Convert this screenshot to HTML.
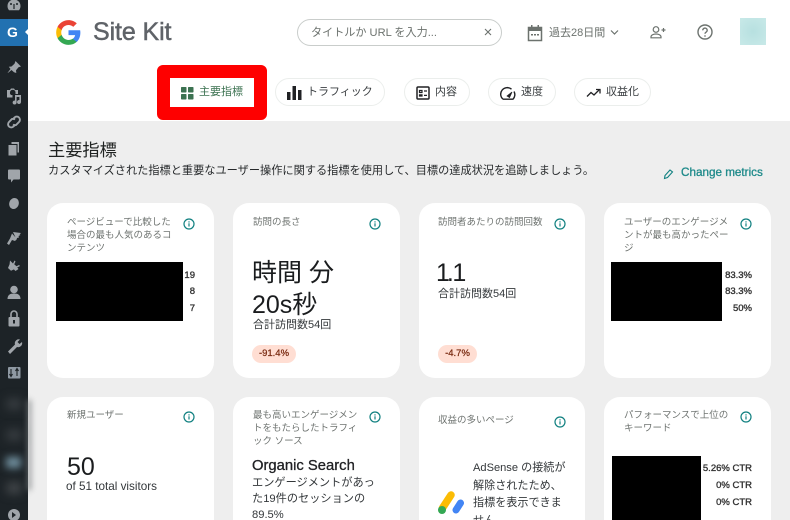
<!DOCTYPE html>
<html lang="ja"><head><meta charset="utf-8">
<style>
html,body{margin:0;padding:0;width:790px;height:520px;overflow:hidden;background:#eee}
body{position:relative;font-family:"Liberation Sans","Noto Sans CJK JP",sans-serif;color:#1f2124}
.a{position:absolute;white-space:nowrap}
.card{position:absolute;background:#fff;border-radius:16px}
.t{position:absolute;font-size:9.5px;line-height:13px;color:#6f7471;white-space:nowrap}
.i{position:absolute;width:12px;height:12px}
.chip{position:absolute;top:78px;height:28px;box-sizing:border-box;border:1px solid #ebeeec;border-radius:15px;background:#fff}
.cl{font-size:11px;line-height:16px;color:#3c4043}
.b{position:absolute;background:#000}
.n{position:absolute;font-size:9.5px;line-height:12px;color:#333;text-align:right;white-space:nowrap;-webkit-text-stroke:.35px #333}
.pill{position:absolute;height:18px;border-radius:9px;background:#ffded3;color:#7a2b12;font-size:9.5px;line-height:17px;text-align:center;-webkit-text-stroke:.25px #7a2b12}
</style></head><body>
<svg width="0" height="0" style="position:absolute"><defs>
<symbol id="info" viewBox="0 0 12 12"><circle cx="6" cy="6" r="5" fill="none" stroke="#108080" stroke-width="1.200"/><rect x="5.400" y="5.300" width="1.200" height="3.200" fill="#108080"/><rect x="5.400" y="3.300" width="1.200" height="1.200" fill="#108080"/></symbol>
</defs></svg>

<!-- sidebar -->
<div class="a" style="left:0;top:0;width:28px;height:520px;background:#1d2327"></div>
<div class="a" style="left:0;top:19px;width:28px;height:27px;background:#2271b1"></div>
<div class="a" style="left:7px;top:23px;font:bold 14px/18px 'Liberation Sans';color:#fff">G</div>
<div class="a" style="left:25px;top:28px;width:0;height:0;border:4px solid transparent;border-right-color:#fff;border-left:0"></div>
<svg class="a" style="left:0;top:0" width="28" height="520" fill="#a0a5aa">
<path d="M7.500 6a6.500 6.500 0 0 1 13 0c0 2-.7 3.200-1.500 4.200H9C8.200 9.200 7.500 8 7.500 6z"/><circle cx="11" cy="4" r="1" fill="#1d2327"/><circle cx="17" cy="4" r="1" fill="#1d2327"/><rect x="13.400" y="4" width="1.200" height="5" fill="#1d2327"/>
<path d="M15.500 61l5.500 5.500-2.500.8-2.500 3 .3 2.700-2.300-.8-2.500-2.200-3 2.500-1 .5 3-4-1.700-2.300 2.700-.2 3-2.700z"/>
<path d="M7 90h3l1-1.500h3l1 1.500h3v4h-2.500v-1.500a2 2 0 0 0-5.500 0 2 2 0 0 0 2.500 2.500v2.500H7z"/><path d="M15 95h6v7a2 2 0 1 1-1.600-1.900V97h-2.800v5.500a2 2 0 1 1-1.600-1.900z"/>
<path d="M12.500 119.500l2-2a3 3 0 0 1 4.500 4.500l-3 3a3 3 0 0 1-3-.5M15.500 124.500l-2 2a3 3 0 0 1-4.500-4.500l3-3a3 3 0 0 1 3 .5" stroke="#a0a5aa" stroke-width="1.900" fill="none"/>
<rect x="11.500" y="142" width="7.500" height="10.500" /><rect x="8" y="144.500" width="9" height="11.500" stroke="#1d2327" stroke-width="1"/>
<path d="M9 169.500h10a1 1 0 0 1 1 1v8a1 1 0 0 1-1 1h-5.500l-2.500 3v-3H9a1 1 0 0 1-1-1v-8a1 1 0 0 1 1-1z"/>
<ellipse cx="14" cy="203.500" rx="4.800" ry="5.600" transform="rotate(20 14 203.500)"/>
<path d="M13 232l8 1-1.500 1.500 1 .5-2 1 .5 1.500-2 .5-.5 1.500zM12 233.500l5 5.500-2 2-3-1-3 5-2-1.500 3-5z"/>
<path d="M8 268l1.700-4 5 5-3.700 1.700zM10 260.500l3 3 1.500-3 1 1-1.300 2.800 2.300 2 2.500-1.300 1 1-2.800 1.500 1.300 1.500-3 2-6-6z"/>
<circle cx="14" cy="289.500" r="3.800"/><path d="M7.500 299c0-4 2.500-5.500 6.500-5.500s6.500 1.500 6.500 5.500z"/>
<rect x="8.500" y="317" width="11" height="9.500" rx="1"/><path d="M11 317v-3a3 3 0 0 1 6 0v3" fill="none" stroke="#a0a5aa" stroke-width="1.600"/><rect x="13" y="320" width="2" height="3.500" fill="#1d2327"/>
<path d="M8 351.500l7-7a4 4 0 0 1 5-5l-2.500 2.500 2 2 2.500-2a4 4 0 0 1-5 5l-7 7z"/>
<rect x="8" y="367" width="12.500" height="11.500" rx="1" fill="#8f99a3"/>
<path d="M11 369v7M9.500 374l1.500 2.500 1.500-2.500M17 376v-7M15.500 371l1.500-2.500 1.500 2.500" stroke="#1d2327" stroke-width="1.100" fill="none"/>
<circle cx="14" cy="515" r="6"/><path d="M12 512l4 3-4 3z" fill="#1d2327"/>
</svg>
<div class="a" style="left:7px;top:399px;width:14px;height:10px;background:#3d4246;filter:blur(5px)"></div>
<div class="a" style="left:7px;top:430px;width:14px;height:10px;background:#3d4246;filter:blur(5px)"></div>
<div class="a" style="left:6px;top:457px;width:15px;height:11px;background:#71909f;filter:blur(4px)"></div>
<div class="a" style="left:7px;top:483px;width:14px;height:10px;background:#4a4e51;filter:blur(5px)"></div>
<div class="a" style="left:28px;top:400px;width:3px;height:90px;background:#85888a;filter:blur(3px)"></div>

<!-- header -->
<div class="a" style="left:28px;top:0;width:762px;height:121px;background:#fff"></div>
<svg class="a" style="left:55px;top:19px" width="27" height="27" viewBox="0 0 48 48">
<path fill="#4285F4" d="M45.100 24.500c0-1.600-.1-3.100-.4-4.500H24v8.700h11.800c-.5 2.700-2.100 5.100-4.400 6.600v5.500h7.100c4.200-3.800 6.600-9.500 6.600-16.300z"/>
<path fill="#34A853" d="M24 46c5.900 0 10.900-2 14.500-5.300l-7.100-5.500c-2 1.300-4.500 2.100-7.400 2.100-5.700 0-10.500-3.800-12.200-9H4.500v5.700C8.100 41.200 15.500 46 24 46z"/>
<path fill="#FBBC05" d="M11.800 28.300c-.4-1.300-.7-2.700-.7-4.300s.3-3 .7-4.300V14H4.500C3 17 2.100 20.400 2.100 24s.9 7 2.400 10z"/>
<path fill="#EA4335" d="M24 10.700c3.200 0 6.100 1.100 8.400 3.300l6.300-6.300C34.900 4.200 29.900 2 24 2 15.500 2 8.100 6.800 4.500 14l7.300 5.700c1.700-5.200 6.500-9 12.200-9z"/>
</svg>
<div class="a" style="left:93px;top:16px;font-size:25px;line-height:32px;color:#5f6368;letter-spacing:-.1px;-webkit-text-stroke:.5px #5f6368">Site Kit</div>

<!-- search -->
<div class="a" style="left:297px;top:19px;width:205px;height:27px;box-sizing:border-box;border:1px solid #c9cdcb;border-radius:14px;background:#fff"></div>
<div class="a" style="left:311px;top:25px;font-size:11.1px;line-height:16px;color:#6c726e">タイトルか URL を入力...</div>
<svg class="a" style="left:484px;top:28px" width="8" height="8" stroke="#6c726e" stroke-width="1.100"><path d="M1 1l6 6M7 1l-6 6"/></svg>
<!-- date -->
<svg class="a" style="left:527px;top:24px" width="16" height="18" viewBox="0 0 16 18"><path d="M1.500 3.500h13v13h-13z" fill="none" stroke="#6c726e" stroke-width="1.500"/><rect x="1" y="3" width="14" height="4" fill="#6c726e"/><rect x="4" y="1" width="1.500" height="3" fill="#6c726e"/><rect x="10.500" y="1" width="1.500" height="3" fill="#6c726e"/><rect x="4" y="10" width="2" height="1.500" fill="#6c726e"/><rect x="7" y="10" width="2" height="1.500" fill="#6c726e"/><rect x="10" y="10" width="2" height="1.500" fill="#6c726e"/></svg>
<div class="a" style="left:549px;top:25px;font-size:11px;line-height:16px;color:#6c726e">過去28日間</div>
<svg class="a" style="left:610px;top:29px" width="9" height="7" fill="none" stroke="#6c726e" stroke-width="1.200"><path d="M1 1.500l3.500 3.500 3.500-3.500"/></svg>
<svg class="a" style="left:650px;top:25px" width="16" height="14" fill="none" stroke="#6c726e" stroke-width="1.200"><circle cx="6" cy="4.500" r="2.800"/><path d="M1 12.800v-1c0-1.800 2.500-2.800 5-2.800s5 1 5 2.800v1z"/><path d="M11.500 5h4M13.500 3v4"/></svg>
<svg class="a" style="left:697px;top:24px" width="16" height="16" fill="none" stroke="#6c726e" stroke-width="1.400"><circle cx="8" cy="8" r="7"/><path d="M5.800 6.300a2.200 2.200 0 1 1 3.400 1.800c-.8.500-1.200.9-1.200 1.700"/><path d="M8 11.300v1.400"/></svg>
<div class="a" style="left:740px;top:18px;width:26px;height:27px;background:radial-gradient(circle at 50% 50%,#b7e0e0,#c8e9e8)"></div>

<!-- tabs -->
<div class="a" style="left:157px;top:65px;width:110px;height:55px;box-sizing:border-box;border:13px solid #fe0000;border-radius:6px;background:#fff"></div>
<svg class="a" style="left:181px;top:87px" width="13" height="13" fill="#3c7251"><rect width="5.500" height="5.500" rx=".7"/><rect x="7" width="5.500" height="5.500" rx=".7"/><rect y="7" width="5.500" height="5.500" rx=".7"/><rect x="7" y="7" width="5.500" height="5.500" rx=".7"/></svg>
<div class="a cl" style="left:199px;top:84px;color:#3c7251">主要指標</div>

<div class="chip" style="left:275px;width:110px"></div>
<svg class="a" style="left:287px;top:86px" width="15" height="14" fill="#202124"><rect y="6" width="3.500" height="8"/><rect x="5.500" width="3.500" height="14"/><rect x="11" y="4" width="3.500" height="10"/></svg>
<div class="a cl" style="left:307px;top:84px">トラフィック</div>

<div class="chip" style="left:404px;width:66px"></div>
<svg class="a" style="left:416px;top:86px" width="14" height="14" fill="none" stroke="#202124" stroke-width="1.500"><rect x="1" y="1" width="12" height="12" rx="1"/><path d="M3.500 4.500h2.500v2h-2.500zM3.500 8.800h2.500v1.200h-2.500zM8 5h3M8 9.400h3" stroke-width="1.200"/></svg>
<div class="a cl" style="left:435px;top:84px">内容</div>

<div class="chip" style="left:488px;width:68px"></div>
<svg class="a" style="left:500px;top:86px" width="16" height="14" fill="none" stroke="#202124" stroke-width="1.400"><path d="M3 13.200a6.500 6.500 0 0 1 8.500-10M14 5.500a6.500 6.500 0 0 1-1 7.700H3"/><path d="M7 10l5-4-2.500 5.500z" fill="#202124" stroke-width=".8"/></svg>
<div class="a cl" style="left:521px;top:84px">速度</div>

<div class="chip" style="left:574px;width:77px"></div>
<svg class="a" style="left:586px;top:88px" width="15" height="10" fill="none" stroke="#202124" stroke-width="1.300"><path d="M1 8.500l4-4 3 2.500 5-5"/><path d="M10 1.500h4v4"/></svg>
<div class="a cl" style="left:606px;top:84px">収益化</div>

<!-- heading -->
<div class="a" style="left:48px;top:138px;font-size:17.2px;line-height:24px;color:#202322">主要指標</div>
<div class="a" style="left:48px;top:162.500px;font-size:11.2px;line-height:16px;color:#26292b">カスタマイズされた指標と重要なユーザー操作に関する指標を使用して、目標の達成状況を追跡しましょう。</div>
<svg class="a" style="left:663px;top:168px" width="11" height="12" fill="none" stroke="#108080" stroke-width="1.100"><path d="M1.500 10.500l.5-3 5-5.500 2.500 2-5 5.500z"/></svg>
<div class="a" style="left:681px;top:165px;font-size:11.7px;line-height:16px;color:#1e8a8a;-webkit-text-stroke:.3px #1e8a8a">Change metrics</div>

<!-- row 1 -->
<div class="card" style="left:47px;top:203px;width:167px;height:175px"></div>
<div class="t" style="left:67px;top:216px">ページビューで比較した<br>場合の最も人気のあるコ<br>ンテンツ</div>
<svg class="i" style="left:183px;top:218px"><use href="#info"/></svg>
<div class="b" style="left:56px;top:262px;width:127px;height:59px"></div>
<div class="n" style="right:595px;top:270px">19</div>
<div class="n" style="right:595px;top:286px">8</div>
<div class="n" style="right:595px;top:303px">7</div>

<div class="card" style="left:233px;top:203px;width:167px;height:175px"></div>
<div class="t" style="left:253px;top:216px">訪問の長さ</div>
<svg class="i" style="left:369px;top:218px"><use href="#info"/></svg>
<div class="a" style="left:252px;top:256px;font-size:25px;line-height:34px;color:#1a1c1e">時間 分</div>
<div class="a" style="left:252px;top:288px;font-size:25px;line-height:34px;color:#1a1c1e">20s秒</div>
<div class="a" style="left:253px;top:317px;font-size:11px;line-height:16px;color:#33373a">合計訪問数54回</div>
<div class="pill" style="left:252px;top:345px;width:44px">-91.4%</div>

<div class="card" style="left:419px;top:203px;width:166px;height:175px"></div>
<div class="t" style="left:438px;top:216px">訪問者あたりの訪問回数</div>
<svg class="i" style="left:554px;top:218px"><use href="#info"/></svg>
<div class="a" style="left:436px;top:256px;font-size:25px;line-height:34px;color:#1a1c1e"><span style="letter-spacing:-3px">1</span><span style="letter-spacing:-1.500px">.</span>1</div>
<div class="a" style="left:438px;top:286px;font-size:11px;line-height:16px;color:#33373a">合計訪問数54回</div>
<div class="pill" style="left:438px;top:345px;width:39px">-4.7%</div>

<div class="card" style="left:604px;top:203px;width:167px;height:175px"></div>
<div class="t" style="left:624px;top:216px">ユーザーのエンゲージメ<br>ントが最も高かったペー<br>ジ</div>
<svg class="i" style="left:740px;top:218px"><use href="#info"/></svg>
<div class="b" style="left:611px;top:262px;width:111px;height:59px"></div>
<div class="n" style="right:38px;top:270px">83.3%</div>
<div class="n" style="right:38px;top:286px">83.3%</div>
<div class="n" style="right:38px;top:303px">50%</div>

<!-- row 2 -->
<div class="card" style="left:47px;top:397px;width:167px;height:140px"></div>
<div class="t" style="left:67px;top:409px">新規ユーザー</div>
<svg class="i" style="left:183px;top:411px"><use href="#info"/></svg>
<div class="a" style="left:67px;top:450px;font-size:25px;line-height:34px;color:#1a1c1e">50</div>
<div class="a" style="left:66px;top:479px;font-size:11.7px;line-height:16px;color:#33373a">of 51 total visitors</div>

<div class="card" style="left:233px;top:397px;width:167px;height:140px"></div>
<div class="t" style="left:253px;top:409px">最も高いエンゲージメン<br>トをもたらしたトラフィ<br>ック ソース</div>
<svg class="i" style="left:369px;top:411px"><use href="#info"/></svg>
<div class="a" style="left:252px;top:456px;font-size:14.8px;line-height:20px;color:#202124;-webkit-text-stroke:.3px #202124">Organic Search</div>
<div class="a" style="left:252px;top:475px;font-size:11.2px;line-height:16px;color:#33373a">エンゲージメントがあっ</div>
<div class="a" style="left:252px;top:491px;font-size:11.2px;line-height:16px;color:#33373a">た19件のセッションの</div>
<div class="a" style="left:252px;top:507px;font-size:11.2px;line-height:16px;color:#33373a">89.5%</div>

<div class="card" style="left:419px;top:397px;width:166px;height:140px"></div>
<div class="t" style="left:438px;top:414px">収益の多いページ</div>
<svg class="i" style="left:554px;top:416px"><use href="#info"/></svg>
<svg class="a" style="left:437px;top:490px" width="27" height="25" viewBox="0 0 27 25">
<path d="M5.500 18L14 5" stroke="#fbbc04" stroke-width="7.500" stroke-linecap="round"/>
<path d="M19 20L23.500 13" stroke="#4285f4" stroke-width="7" stroke-linecap="round"/>
<circle cx="5" cy="20" r="4" fill="#34a853"/>
</svg>
<div class="a" style="left:473px;top:460px;font-size:11.1px;line-height:17.500px;color:#33373a">AdSense の接続が<br>解除されたため、<br>指標を表示できま<br>せん。</div>

<div class="card" style="left:604px;top:397px;width:167px;height:140px"></div>
<div class="t" style="left:624px;top:409px">パフォーマンスで上位の<br>キーワード</div>
<svg class="i" style="left:740px;top:411px"><use href="#info"/></svg>
<div class="b" style="left:612px;top:456px;width:89px;height:64px"></div>
<div class="n" style="right:38px;top:463px">5.26% CTR</div>
<div class="n" style="right:38px;top:480px">0% CTR</div>
<div class="n" style="right:38px;top:497px">0% CTR</div>
</body></html>
